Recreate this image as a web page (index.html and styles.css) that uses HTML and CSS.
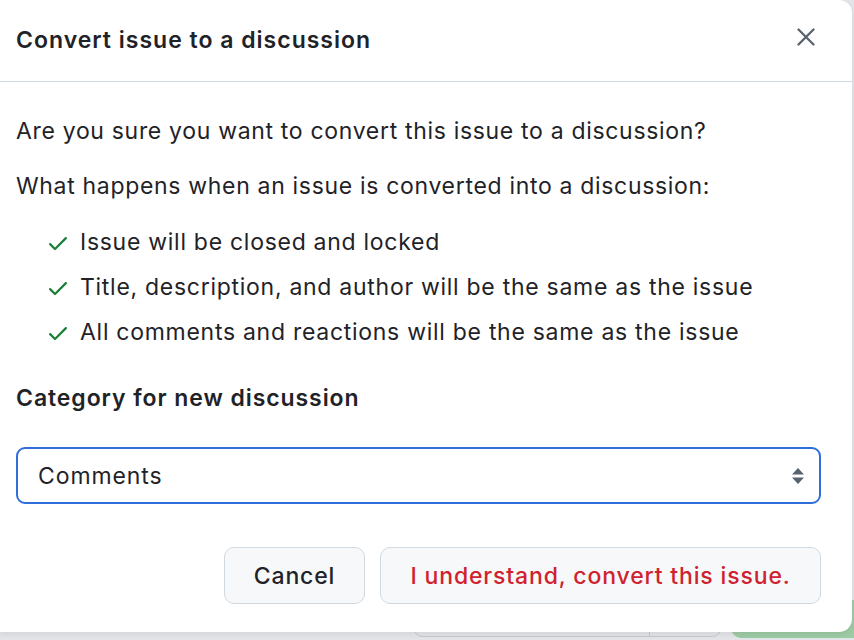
FILE: index.html
```html
<!DOCTYPE html>
<html lang="en">
<head>
<meta charset="utf-8">
<title>Convert issue to a discussion</title>
<link rel="stylesheet" href="styles.css">
</head>
<body>
<div class="backdrop">
  <div class="bg-group"><span class="bg-seg bg-seg-main"></span><span class="bg-seg bg-seg-side"></span></div>
  <div class="bg-green"></div>
</div>
<div class="dialog">
  <header class="dialog-header">
    <h1 class="dialog-title">Convert issue to a discussion</h1>
    <button class="close-btn" aria-label="Close">
      <svg width="18" height="18" viewBox="0 0 18 18"><path d="M1.5 1.5L16.5 16.5M16.5 1.5L1.5 16.5" stroke="#59636e" stroke-width="2.3" stroke-linecap="round"/></svg>
    </button>
  </header>
  <div class="dialog-body">
    <p class="para first">Are you sure you want to convert this issue to a discussion?</p>
    <p class="para second">What happens when an issue is converted into a discussion:</p>
    <ul class="checklist">
      <li class="check-item"><svg class="check" width="24" height="24" viewBox="0 0 16 16"><path fill="#1a7f37" d="M13.78 4.22a.75.75 0 0 1 0 1.06l-7.25 7.25a.75.75 0 0 1-1.06 0L2.22 9.28a.751.751 0 0 1 .018-1.042.751.751 0 0 1 1.042-.018L6 10.94l6.72-6.72a.75.75 0 0 1 1.06 0Z"/></svg><span>Issue will be closed and locked</span></li>
      <li class="check-item"><svg class="check" width="24" height="24" viewBox="0 0 16 16"><path fill="#1a7f37" d="M13.78 4.22a.75.75 0 0 1 0 1.06l-7.25 7.25a.75.75 0 0 1-1.06 0L2.22 9.28a.751.751 0 0 1 .018-1.042.751.751 0 0 1 1.042-.018L6 10.94l6.72-6.72a.75.75 0 0 1 1.06 0Z"/></svg><span>Title, description, and author will be the same as the issue</span></li>
      <li class="check-item"><svg class="check" width="24" height="24" viewBox="0 0 16 16"><path fill="#1a7f37" d="M13.78 4.22a.75.75 0 0 1 0 1.06l-7.25 7.25a.75.75 0 0 1-1.06 0L2.22 9.28a.751.751 0 0 1 .018-1.042.751.751 0 0 1 1.042-.018L6 10.94l6.72-6.72a.75.75 0 0 1 1.06 0Z"/></svg><span>All comments and reactions will be the same as the issue</span></li>
    </ul>
    <h2 class="field-label">Category for new discussion</h2>
    <div class="select">
      <span class="select-value">Comments</span>
      <svg class="select-arrows" width="14" height="18" viewBox="0 0 14 18"><path d="M7 1L13 7.5H1Z" fill="#59636e"/><path d="M7 17L13 10.5H1Z" fill="#59636e"/></svg>
    </div>
    <div class="actions">
      <button class="btn">Cancel</button>
      <button class="btn btn-danger">I understand, convert this issue.</button>
    </div>
  </div>
</div>
</body>
</html>
```
FILE: styles.css
```css
* { box-sizing: border-box; }
html, body { margin: 0; padding: 0; }
body {
  width: 854px;
  height: 640px;
  overflow: hidden;
  background: #e2e4e7;
  font-family: Inter, "Noto Sans", "Liberation Sans", sans-serif;
  color: #1f2328;
  position: relative;
}
.backdrop {
  position: absolute;
  left: 0;
  top: 0;
  width: 854px;
  height: 640px;
}
.bg-group {
  position: absolute;
  left: 413px;
  top: 600px;
  width: 309px;
  height: 37px;
  border: 1px solid #c5c8cc;
  border-radius: 10px;
  display: flex;
}
.bg-seg-main { flex: 0 0 236px; border-right: 1px solid #c5c8cc; }
.bg-green {
  position: absolute;
  left: 731px;
  top: 600px;
  width: 140px;
  height: 38px;
  background: #9ccba4;
  border-radius: 10px;
}
.dialog {
  position: relative;
  width: 852px;
  height: 632px;
  background: #ffffff;
  border-radius: 0 13px 13px 0;
  box-shadow: 0 2px 6px rgba(0,0,0,0.08);
  display: flex;
  flex-direction: column;
}
.dialog-header {
  height: 82px;
  border-bottom: 1px solid #d1d9e0;
  display: flex;
  align-items: center;
  justify-content: space-between;
  padding: 0 16px 2px 16px;
}
.dialog-title {
  margin: 0;
  font-size: 23px;
  font-weight: 600;
  letter-spacing: 1px;
}
.close-btn {
  border: 0;
  background: transparent;
  padding: 0;
  width: 32px;
  height: 32px;
  display: flex;
  align-items: center;
  justify-content: center;
  margin-right: 14px;
  margin-top: -6px;
}
.dialog-body {
  padding: 34px 16px 0 16px;
}
.para {
  margin: 0;
  font-size: 23px;
  line-height: 31px;
  letter-spacing: 0.68px;
}
.para.second { margin-top: 24px; }
.checklist {
  list-style: none;
  margin: 25px 0 0 0;
  padding: 0 0 0 30px;
}
.check-item {
  display: flex;
  align-items: center;
  gap: 10px;
  font-size: 23px;
  line-height: 31px;
  letter-spacing: 0.72px;
  margin-bottom: 14px;
}
.check-item:last-child { margin-bottom: 0; }
.check { flex: 0 0 24px; }
.field-label {
  margin: 35px 0 0 0;
  font-size: 23px;
  line-height: 31px;
  font-weight: 600;
  letter-spacing: 0.93px;
}
.select {
  margin-top: 33px;
  width: 805px;
  height: 57px;
  border: 2px solid #2f6fdc;
  border-radius: 9px;
  display: flex;
  align-items: center;
  justify-content: space-between;
  padding: 0 14px 0 20px;
  background: #fff;
}
.select-value {
  font-size: 23px;
  letter-spacing: 0.9px;
}
.actions {
  margin-top: 43px;
  display: flex;
  justify-content: flex-end;
  gap: 15px;
  width: 805px;
}
.btn {
  height: 57px;
  border: 1px solid #d1d9e0;
  background: #f6f8fa;
  border-radius: 10px;
  font-family: inherit;
  font-size: 23px;
  font-weight: 500;
  letter-spacing: 0.85px;
  color: #1f2328;
  padding: 0;
}
.btn:first-child { width: 141px; }
.btn-danger { color: #cf222e; width: 441px; }
```
